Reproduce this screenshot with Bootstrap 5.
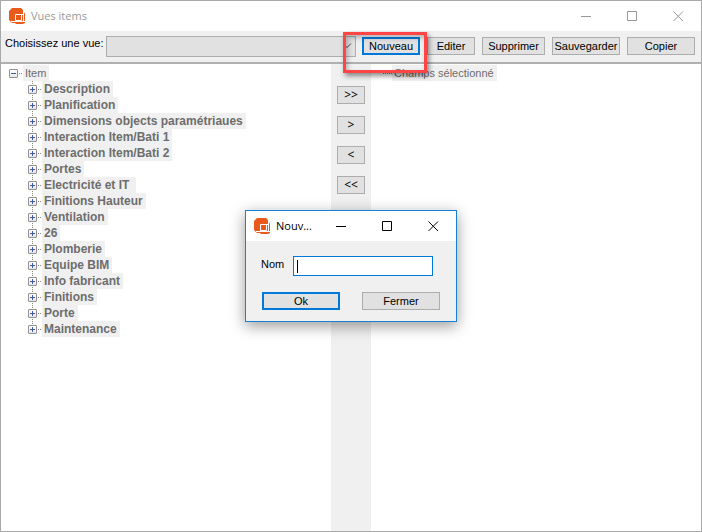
<!DOCTYPE html>
<html lang="fr">
<head>
<meta charset="utf-8">
<meta name="viewport" content="width=device-width, initial-scale=1">
<title>Vues items</title>
<link href="https://cdn.jsdelivr.net/npm/bootstrap@5.3.0/dist/css/bootstrap.min.css" rel="stylesheet">
<style>
body{font:11px/16px "Liberation Sans",Arial,sans-serif;color:#000;background:#fff}
.win{border:1px solid #a9a9a9}
.titlebar{height:30px;padding-left:8px;background:#fff;color:#999;font:11px/16px "Open Sans","Noto Sans",sans-serif}
.logo{width:17px;height:17px;margin-right:5px;flex:none}
.cap{width:46px;height:30px;padding:0;border:0;background:none;color:inherit;display:flex;align-items:center;justify-content:center}
.cap svg,.chev{fill:none;stroke:currentColor;display:block}
.toolbar{background:#f0f0f0;border-bottom:2px solid #b0b0b0;height:33px;padding:5px 6px 0 4px}
.toolbar label{width:101px;flex:none;white-space:nowrap;line-height:14px}
.picker{margin-right:6px;height:21px}
.picker select{appearance:none;width:100%;height:21px;border:1px solid #adadad;border-radius:0;background:#e1e1e1;display:block}
.chev{right:3px;top:7px;pointer-events:none;color:#444}
.key{height:18px;padding:0;border:1px solid #adadad;border-radius:0;background:#e1e1e1;font-size:11px;line-height:16px;color:#000;--bs-btn-hover-bg:#e5f1fb}
.key.main{border:2px solid #0078d7;line-height:14px}
.toolbar .key{margin-top:1px}
.w-new{width:58px}.w-edit{width:48px}.w-del{width:63px}.w-std{width:68px}
.actions{gap:7px}
.zone-new{position:relative;margin-right:7px}
.marker{position:absolute;left:-19px;right:-7px;top:-4px;bottom:-18px;border:3px solid #ff4545;box-shadow:2px 3px 5px rgba(0,0,0,.45),inset 2px 3px 5px rgba(0,0,0,.25);pointer-events:none;z-index:2}
.pane{padding:1px 0 0 8px}
.pane-left{flex:1 1 330px}
.pane-right{flex:1 1 330px;padding-left:11px}
.moves{width:40px;flex:none;background:#f0f0f0;padding-top:22px;gap:12px}
.moves .key{width:28px;font-family:"Noto Sans",sans-serif;font-size:12px;line-height:14px}
.tree,.tree ul{list-style:none;margin:0;padding:0;color:#6d6d6d}
.tree ul{padding-left:19px;font-weight:700;font-size:12px}
.tree li li{background:repeating-linear-gradient(#888 0 1px,transparent 1px 2px) 4px 0/1px 100% no-repeat}
.tree li li:last-child{background-size:1px 8px}
.node{display:flex;align-items:center;height:16px}
.node button{width:9px;height:9px;padding:0;border:1px solid #919191;border-radius:1px;flex:none;background:linear-gradient(#3c5a9c,#3c5a9c) 1px 3px/5px 1px no-repeat,linear-gradient(#fff,#e8e8e8)}
.node button.plus{background:linear-gradient(#3c5a9c,#3c5a9c) 1px 3px/5px 1px no-repeat,linear-gradient(#3c5a9c,#3c5a9c) 3px 1px/1px 5px no-repeat,linear-gradient(#fff,#e8e8e8)}
.node::before{content:"";order:1;width:5px;height:1px;background:repeating-linear-gradient(90deg,transparent 0 1px,#888 1px 2px)}
.node span{order:2;background:#f0f0f0;padding:0 3px 0 2px;line-height:16px;white-space:nowrap}
.leaf::before{width:10px}
.popup{left:245px;top:210px;width:212px;border:1px solid #1a80d4;background:#f0f0f0;box-shadow:0 4px 14px rgba(0,0,0,.4);z-index:3}
.popup .titlebar{color:#000}
.popup-body{padding:15px 16px 11px 15px}
.popup-body label{width:32px;flex:none;padding-bottom:4px}
.popup-body input{height:20px;border:1px solid #0078d7;border-radius:0;padding:0 3px;font-size:11px;margin-right:7px;min-width:0;outline:0;caret-color:transparent;background:linear-gradient(#000,#000) 3px 3px/1px 13px no-repeat #fff}
.popup-body input:not(:placeholder-shown){background:#fff;caret-color:#000}
.keys{margin:16px 0 0 1px;gap:22px}
.keys .key{width:78px}
</style>
<script src="https://cdn.jsdelivr.net/npm/bootstrap@5.3.0/dist/js/bootstrap.bundle.min.js"></script>
</head>
<body>
<svg class="d-none" aria-hidden="true">
<symbol id="logo" viewBox="0 0 17 17"><path d="M3 0h9l2 2h1v2l1 2v9l-2 1H7l-1-1H3l-3-3V3z" fill="#e95a1d"/><path d="M14.500 2v12M2 13.500h14M6.500 13.500v-7h8M6.500 12.500h6v-6" fill="none" stroke="#fff"/></symbol>
<symbol id="min" viewBox="0 0 11 11"><path d="M0 5.500h10"/></symbol>
<symbol id="max" viewBox="0 0 11 11"><path d="M.5.5h9v9h-9z"/></symbol>
<symbol id="close" viewBox="0 0 11 11"><path d="M.5.5l9.500 9.500M10 .5L.5 10"/></symbol>
</svg>
<main class="win min-vh-100 d-flex flex-column">
<header class="titlebar d-flex align-items-center">
<svg class="logo" aria-hidden="true"><use href="#logo"/></svg><span class="flex-grow-1">Vues items</span>
<button class="cap" aria-label="Réduire"><svg width="11" height="11"><use href="#min"/></svg></button>
<button class="cap" aria-label="Agrandir"><svg width="11" height="11"><use href="#max"/></svg></button>
<button class="cap" aria-label="Quitter"><svg width="11" height="11"><use href="#close"/></svg></button>
</header>
<div class="toolbar d-flex align-items-start">
<label for="vue">Choisissez une vue:</label>
<div class="picker position-relative flex-grow-1"><select id="vue"><option></option></select><svg class="chev position-absolute" width="9" height="7"><path d="M1 2.500l2 2 4-4"/></svg></div>
<div class="zone-new d-flex"><button class="btn key main w-new">Nouveau</button><div class="marker"></div></div>
<div class="actions d-flex"><button class="btn key w-edit">Editer</button><button class="btn key w-del">Supprimer</button><button class="btn key w-std">Sauvegarder</button><button class="btn key w-std">Copier</button></div>
</div>
<div class="d-flex flex-grow-1">
<section class="pane pane-left">
<ul class="tree"><li><div class="node"><button aria-label="Replier Item"></button><span>Item</span></div>
<ul>
<li><div class="node"><button class="plus" aria-label="Déplier"></button><span>Description</span></div></li>
<li><div class="node"><button class="plus" aria-label="Déplier"></button><span>Planification</span></div></li>
<li><div class="node"><button class="plus" aria-label="Déplier"></button><span>Dimensions objects paramétriaues</span></div></li>
<li><div class="node"><button class="plus" aria-label="Déplier"></button><span>Interaction Item/Bati 1</span></div></li>
<li><div class="node"><button class="plus" aria-label="Déplier"></button><span>Interaction Item/Bati 2</span></div></li>
<li><div class="node"><button class="plus" aria-label="Déplier"></button><span>Portes</span></div></li>
<li><div class="node"><button class="plus" aria-label="Déplier"></button><span>Electricité et IT&nbsp;</span></div></li>
<li><div class="node"><button class="plus" aria-label="Déplier"></button><span>Finitions Hauteur</span></div></li>
<li><div class="node"><button class="plus" aria-label="Déplier"></button><span>Ventilation</span></div></li>
<li><div class="node"><button class="plus" aria-label="Déplier"></button><span>26</span></div></li>
<li><div class="node"><button class="plus" aria-label="Déplier"></button><span>Plomberie</span></div></li>
<li><div class="node"><button class="plus" aria-label="Déplier"></button><span>Equipe BIM</span></div></li>
<li><div class="node"><button class="plus" aria-label="Déplier"></button><span>Info fabricant</span></div></li>
<li><div class="node"><button class="plus" aria-label="Déplier"></button><span>Finitions</span></div></li>
<li><div class="node"><button class="plus" aria-label="Déplier"></button><span>Porte</span></div></li>
<li><div class="node"><button class="plus" aria-label="Déplier"></button><span>Maintenance</span></div></li>
</ul></li></ul>
</section>
<div class="moves d-flex flex-column align-items-center"><button class="btn key">&gt;&gt;</button><button class="btn key">&gt;</button><button class="btn key">&lt;</button><button class="btn key">&lt;&lt;</button></div>
<section class="pane pane-right"><ul class="tree"><li class="node leaf"><span>Champs sélectionné</span></li></ul></section>
</div>
</main>
<div class="popup position-absolute" role="dialog" aria-label="Nouveau">
<div class="titlebar d-flex align-items-center"><svg class="logo" aria-hidden="true"><use href="#logo"/></svg><span class="flex-grow-1">Nouv...</span>
<button class="cap" aria-label="Réduire"><svg width="11" height="11"><use href="#min"/></svg></button>
<button class="cap" aria-label="Agrandir"><svg width="11" height="11"><use href="#max"/></svg></button>
<button class="cap" aria-label="Quitter"><svg width="11" height="11"><use href="#close"/></svg></button></div>
<form class="popup-body"><div class="d-flex align-items-center"><label for="nom">Nom</label><input id="nom" class="flex-grow-1" type="text" placeholder=" " autofocus></div>
<div class="keys d-flex"><button type="button" class="btn key main">Ok</button><button type="button" class="btn key">Fermer</button></div></form>
</div>
</body>
</html>
